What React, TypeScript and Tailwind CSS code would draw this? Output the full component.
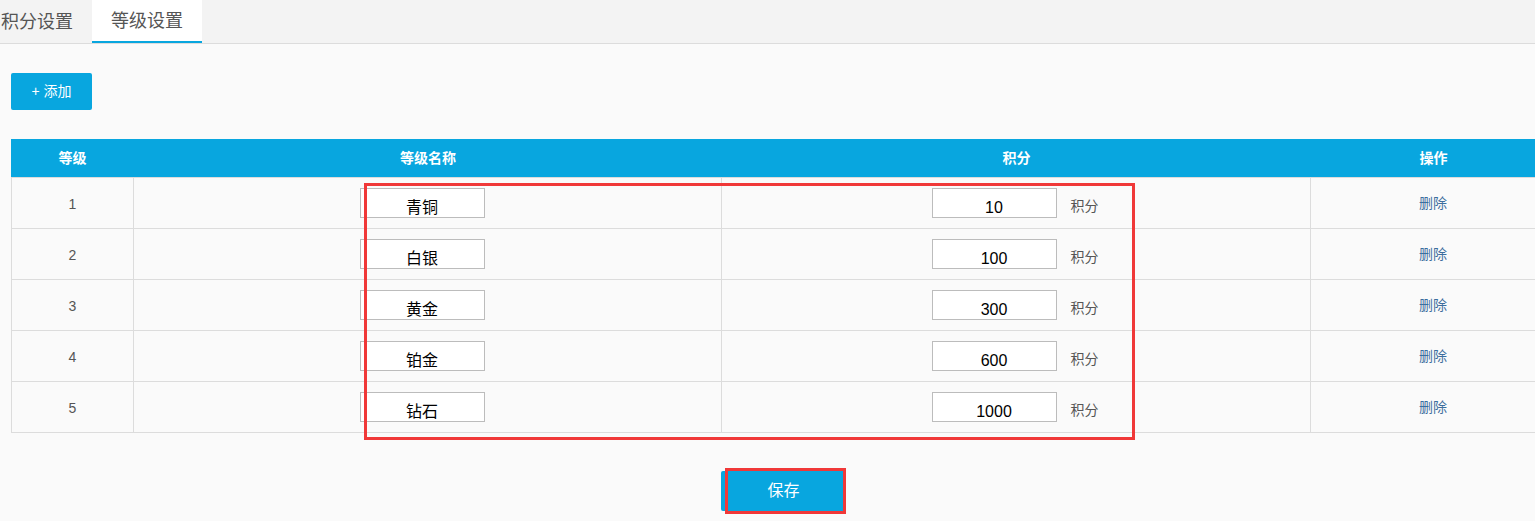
import { useState } from 'react';

type Level = { id: number; name: string; score: string };

const INITIAL: Level[] = [
    { id: 1, name: '青铜', score: '10' },
    { id: 2, name: '白银', score: '100' },
    { id: 3, name: '黄金', score: '300' },
    { id: 4, name: '铂金', score: '600' },
    { id: 5, name: '钻石', score: '1000' },
];

const CJK = "font-['Liberation_Sans','Noto_Sans_CJK_SC',sans-serif]";

function App() {
    const [tab, setTab] = useState<'points' | 'levels'>('levels');
    const [levels, setLevels] = useState<Level[]>(INITIAL);

    const update = (id: number, key: 'name' | 'score', value: string) =>
        setLevels(ls => ls.map(l => (l.id === id ? { ...l, [key]: value } : l)));

    const addLevel = () =>
        setLevels(ls => [...ls, { id: ls.length + 1, name: '', score: '' }]);

    const removeLevel = (id: number) =>
        setLevels(ls => ls.filter(l => l.id !== id).map((l, i) => ({ ...l, id: i + 1 })));

    return (
        <div className={`relative min-h-[521px] w-full overflow-hidden bg-[#fafafa] ${CJK}`}>
            {/* Tabs */}
            <div className="flex h-[44px] border-b border-[#dcdcdc] bg-[#f3f3f3]">
                <button onClick={() => setTab('points')}
                    className={`h-[43px] pl-[1px] pr-[19px] text-[18px] leading-[40px] text-[#555] ${tab === 'points' ? 'bg-white border-b-2 border-[#08a6df]' : ''}`}>
                    积分设置
                </button>
                <button onClick={() => setTab('levels')}
                    className={`h-[43px] px-[19px] text-[18px] leading-[40px] text-[#555] ${tab === 'levels' ? 'bg-white border-b-2 border-[#08a6df]' : ''}`}>
                    等级设置
                </button>
            </div>

            <div className="pl-[11px]">
                <button onClick={addLevel}
                    className="mt-[29px] h-[37px] w-[81px] rounded-[2px] bg-[#08a6df] text-[14px] text-white">
                    + 添加
                </button>

                {/* Table */}
                <div className="mt-[29px] w-[1545px]">
                    <div className="grid h-[38px] grid-cols-[123px_588px_589px_245px] items-center bg-[#08a6df] text-[14px] font-bold text-white">
                        <div className="text-center">等级</div>
                        <div className="text-center">等级名称</div>
                        <div className="text-center">积分</div>
                        <div className="text-center">操作</div>
                    </div>
                    <div className="border-l border-t border-[#dcdcdc]">
                        {levels.map(l => (
                            <div key={l.id}
                                className="grid h-[51px] grid-cols-[122px_588px_589px_245px] border-b border-[#dcdcdc] text-[14px]">
                                <div className="flex items-center justify-center border-r border-[#dcdcdc] pt-[2px] text-[#555]">{l.id}</div>
                                <div className="flex items-center justify-center border-r border-[#dcdcdc]">
                                    <input value={l.name} onChange={e => update(l.id, 'name', e.target.value)}
                                        className="mr-[11px] h-[30px] w-[125px] border border-[#bcbcbc] bg-white pt-[6px] text-center text-[16px] text-black outline-none" />
                                </div>
                                <div className="flex items-center justify-center border-r border-[#dcdcdc] pr-[2px]">
                                    <input value={l.score} onChange={e => update(l.id, 'score', e.target.value)}
                                        className="h-[30px] w-[125px] border border-[#bcbcbc] bg-white pt-[10px] text-center text-[16px] leading-[14px] text-black outline-none" />
                                    <span className="ml-[14px] pt-[7px] text-[#555]">积分</span>
                                </div>
                                <div className="flex items-center justify-center pr-[1px]">
                                    <button onClick={() => removeLevel(l.id)} className="pt-[1px] text-[#3c6e9e]">删除</button>
                                </div>
                            </div>
                        ))}
                    </div>

                    <div className="mt-[38px] flex justify-center">
                        <button className="h-[40px] w-[125px] rounded-[2px] bg-[#08a6df] text-[16px] text-white">
                            保存
                        </button>
                    </div>
                </div>
            </div>

            {/* Annotation boxes */}
            <div className="pointer-events-none absolute left-[364px] top-[183px] h-[257px] w-[771px] border-[3px] border-[#f03838]" />
            <div className="pointer-events-none absolute left-[725px] top-[468px] h-[46px] w-[121px] border-[3px] border-[#f03838]" />
        </div>
    );
}

export default App;
